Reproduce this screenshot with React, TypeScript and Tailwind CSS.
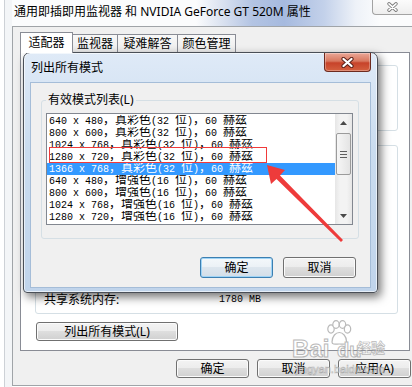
import React from 'react';

const modes = [
  '640 x 480，真彩色(32 位)，60 赫兹',
  '800 x 600，真彩色(32 位)，60 赫兹',
  '1024 x 768，真彩色(32 位)，60 赫兹',
  '1280 x 720，真彩色(32 位)，60 赫兹',
  '1366 x 768，真彩色(32 位)，60 赫兹',
  '640 x 480，增强色(16 位)，60 赫兹',
  '800 x 600，增强色(16 位)，60 赫兹',
  '1024 x 768，增强色(16 位)，60 赫兹',
  '1280 x 720，增强色(16 位)，60 赫兹',
];

// bitmap-ish list font: latin at 6px per char, CJK at 12px
function Mono({ text }: { text: string }) {
  const parts = text.split(/([\u3000-\u303f\u4e00-\u9fff\uff00-\uffef]+)/);
  return (
    <>
      {parts.map((p, i) =>
        i % 2 ? (
          <span key={i} className="text-[12px] leading-[12px]">{p}</span>
        ) : (
          <span key={i}>{p}</span>
        )
      )}
    </>
  );
}

function Btn({ children, className = '', focus = false }: { children: React.ReactNode; className?: string; focus?: boolean }) {
  return (
    <div
      className={`flex items-center justify-center rounded-[3px] border text-[12px] leading-[14px] text-black ${
        focus
          ? 'border-[#3c7fb1] bg-[linear-gradient(#f4f8fb,#ebf1f6_50%,#dde6ee_50%,#d3dee8)] shadow-[inset_0_0_0_1px_#9fd4f6]'
          : 'border-[#707070] bg-[linear-gradient(#f3f3f3,#ececec_50%,#dedede_50%,#d0d0d0)] shadow-[inset_0_0_0_1px_#fbfbfb]'
      } ${className}`}
    >
      {children}
    </div>
  );
}

function Scrollbar() {
  return (
    <div className="w-[17px] h-full flex flex-col bg-[linear-gradient(90deg,#e6e6e6,#f3f3f3_30%,#f3f3f3_70%,#e6e6e6)]">
      <div className="h-[17px] flex items-center justify-center">
        <svg width="7" height="4" viewBox="0 0 7 4">
          <path d="M3.5 0 L7 4 L0 4Z" fill="#4a4a4a" />
        </svg>
      </div>
      <div className="mt-[2px] mx-[1px] h-[42px] rounded-[2px] border border-[#9b9b9b] bg-[linear-gradient(90deg,#f6f6f6,#e4e4e4)] flex flex-col items-center justify-center gap-[2px]">
        <div className="w-[7px] h-[1px] bg-[#5f5f5f]" />
        <div className="w-[7px] h-[1px] bg-[#5f5f5f]" />
        <div className="w-[7px] h-[1px] bg-[#5f5f5f]" />
      </div>
      <div className="flex-1" />
      <div className="h-[17px] flex items-center justify-center">
        <svg width="7" height="4" viewBox="0 0 7 4">
          <path d="M0 0 L7 0 L3.5 4Z" fill="#4a4a4a" />
        </svg>
      </div>
    </div>
  );
}

function ModesDialog() {
  return (
    <div className="absolute left-[23px] top-[52px] w-[355px] h-[241px] rounded-t-[7px] rounded-b-[4px] border border-[#4a4f57] bg-[linear-gradient(#dfeaf7,#cadcef_40%,#c0d4eb)] shadow-[3px_4px_10px_rgba(0,0,0,0.55),inset_0_0_0_1px_rgba(255,255,255,0.6)] flex flex-col">
      <div className="h-[29px] flex items-start">
        <span className="self-center pl-[7px] text-[12px] leading-[16px] text-black">列出所有模式</span>
        <div className="ml-auto mr-[6px] w-[47px] h-[19px] rounded-b-[4px] border border-t-0 border-[#6d2a1f] bg-[linear-gradient(#eba797,#d8785f_45%,#c7432a_55%,#d4603f)] shadow-[inset_0_0_0_1px_rgba(255,255,255,0.3)] flex items-center justify-center">
          <svg width="15" height="11" viewBox="0 0 15 11">
            <path d="M3.5 2 L11.5 9 M11.5 2 L3.5 9" stroke="#5a2018" strokeWidth="4.2" strokeLinecap="round" />
            <path d="M3.5 2 L11.5 9 M11.5 2 L3.5 9" stroke="#ffffff" strokeWidth="2.3" strokeLinecap="round" />
          </svg>
        </div>
      </div>
      <div className="mx-[6px] h-[206px] border border-[#a5bdd8] bg-[#f0f0f0] flex flex-col">
        <fieldset className="ml-[10px] mt-[10px] w-[318px] border border-[#d5dfe5] rounded-[3px] pl-[4px] pr-[5px] pb-[13px]">
          <legend className="px-[2px] text-[12px] leading-[14px] text-black">有效模式列表(L)</legend>
          <div className="mt-[6px] h-[112px] border border-[#828790] bg-white flex">
            <div className="w-[288px] pt-[1px] flex flex-col font-['Liberation_Mono','Noto_Sans_CJK_SC',monospace] text-[10px] leading-[12px]">
              {modes.map((m, i) => (
                <div
                  key={m}
                  className={`h-[12px] overflow-hidden whitespace-pre pl-[2px] ${i === 4 ? 'bg-[#3399ff] text-white' : 'text-black'}`}
                >
                  <Mono text={m} />
                </div>
              ))}
            </div>
            <Scrollbar />
          </div>
        </fieldset>
        <div className="mt-[18px] flex justify-end gap-[10px] pr-[14px]">
          <Btn focus className="w-[73px] h-[21px]">确定</Btn>
          <Btn className="w-[73px] h-[21px]">取消</Btn>
        </div>
      </div>
    </div>
  );
}

function Tab({ label, selected = false, className = '' }: { label: string; selected?: boolean; className?: string }) {
  return (
    <div
      className={
        selected
          ? `h-[21px] -mb-[1px] relative z-10 border border-b-0 border-[#898c95] bg-white flex items-center justify-center text-[12px] leading-[16px] ${className}`
          : `h-[18px] border-t border-r border-[#898c95] bg-[linear-gradient(#f8f8f8,#ececec)] flex items-center justify-center text-[12px] leading-[16px] ${className}`
      }
    >
      {label}
    </div>
  );
}

function Watermark() {
  return (
    <div className="absolute inset-0 pointer-events-none opacity-75">
      <svg className="absolute left-[325px] top-[320px]" width="27" height="26" viewBox="0 0 27 26">
        <g fill="#ffffff" stroke="#a3a3a3" strokeWidth="1.2">
          <ellipse cx="6" cy="9" rx="3.2" ry="4.2" />
          <ellipse cx="11" cy="4.5" rx="3.2" ry="3.8" />
          <ellipse cx="17.5" cy="4.5" rx="3.2" ry="3.8" />
          <ellipse cx="22.5" cy="9" rx="3.2" ry="4.2" />
          <path d="M7 22 C7 16 11 12.5 14.3 12.5 C17.6 12.5 21.6 16 21.6 22 C21.6 25 17.6 24 14.3 24 C11 24 7 25 7 22Z" />
        </g>
      </svg>
      <span className="absolute left-[292px] top-[337px] text-[24px] leading-[24px] font-bold text-white [-webkit-text-stroke:1px_#a3a3a3] font-['Liberation_Sans',sans-serif]">Bai</span>
      <span className="absolute left-[337px] top-[339px] text-[20px] leading-[22px] font-bold text-white [-webkit-text-stroke:1px_#a3a3a3] font-['Liberation_Sans',sans-serif]">du</span>
      <span className="absolute left-[357px] top-[338px] text-[14px] leading-[18px] font-bold text-white [-webkit-text-stroke:0.7px_#a3a3a3] font-['Noto_Sans_CJK_SC',sans-serif]">经验</span>
      <span className="absolute left-[296px] top-[363px] text-[11px] leading-[13px] text-white [-webkit-text-stroke:0.5px_#9a9a9a] font-['Liberation_Sans',sans-serif]">jingyan.baidu.com</span>
    </div>
  );
}

export default function App() {
  return (
    <div className="relative w-[412px] h-[387px] overflow-hidden bg-white flex text-black font-['Noto_Sans','Noto_Sans_CJK_SC',sans-serif]">
      {/* left window frame */}
      <div className="w-[12px] pl-[4px] h-full">
        <div className="h-full border-l border-[#cdd1d6] bg-[#f3f5f7]" />
      </div>

      <div className="w-[400px] flex flex-col">
        {/* title bar */}
        <div className="h-[26px] flex items-start bg-[linear-gradient(90deg,#fbfcfd_0%,#fbfcfd_46%,#dde4f1_52%,#b3c4e3_60%,#a6badf_68%,#c3d1ea_78%,#eef2f8_86%,#fbfcfd_92%)]">
          <span className="pl-[2px] pt-[4px] text-[12px] leading-[16px] whitespace-nowrap">
            通用即插即用监视器 和 NVIDIA GeForce GT 520M 属性
          </span>
          <div className="ml-auto w-[40px] h-[15px] border-l border-b border-[#a3a3a3] rounded-bl-[4px] bg-[linear-gradient(#fbfbfb,#eeeeee)] flex items-center justify-center">
            <svg width="13" height="10" viewBox="0 0 13 10">
              <path d="M3 1.8 L10 8.2 M10 1.8 L3 8.2" stroke="#7a7a7a" strokeWidth="3.4" strokeLinecap="round" />
              <path d="M3 1.8 L10 8.2 M10 1.8 L3 8.2" stroke="#ffffff" strokeWidth="1.6" strokeLinecap="round" />
            </svg>
          </div>
        </div>

        {/* client area */}
        <div className="h-[360px] border-l border-t border-b border-[#a0a4a8] bg-[#f0f0f0] pt-[5px] flex flex-col">
          <div className="ml-[7px] h-[20px] flex items-end">
            <Tab label="适配器" selected className="w-[53px]" />
            <Tab label="监视器" className="w-[45px]" />
            <Tab label="疑难解答" className="w-[60px]" />
            <Tab label="颜色管理" className="w-[58px]" />
          </div>
          <div className="ml-[7px] w-[390px] h-[299px] border border-[#898c95] bg-white pt-[12px] pl-[14px] pr-[11px] flex flex-col">
            <div className="h-[66px] border border-[#d5dfe5] rounded-[3px]" />
            <div className="mt-[14px] h-[169px] border border-[#d5dfe5] rounded-[3px] flex flex-col justify-end pb-[6px] pl-[8px]">
              <div className="flex text-[12px] leading-[14px]">
                <span className="w-[175px]">共享系统内存:</span>
                <span className="font-['Liberation_Mono',monospace] text-[10px] leading-[14px]">1780 MB</span>
              </div>
            </div>
            <Btn className="mt-[8px] ml-[1px] w-[142px] h-[19px]">列出所有模式(L)</Btn>
          </div>
          <div className="mt-[8px] flex justify-end gap-[8px] pr-[1px]">
            <Btn className="w-[73px] h-[19px]">确定</Btn>
            <Btn className="w-[73px] h-[19px]">取消</Btn>
            <Btn className="w-[73px] h-[19px]">应用(A)</Btn>
          </div>
        </div>
      </div>

      <ModesDialog />

      {/* annotation: red box + arrow */}
      <div className="absolute left-[49px] top-[147px] w-[218px] h-[16px] border border-[#f03a3a] pointer-events-none" />
      <svg className="absolute left-0 top-0 pointer-events-none" width="412" height="387" viewBox="0 0 412 387">
        <polygon points="267,165 285,170 280,175.5 343,240 341,242 276.5,179 271,184" fill="#ee3b3b" />
      </svg>

      <Watermark />
    </div>
  );
}
